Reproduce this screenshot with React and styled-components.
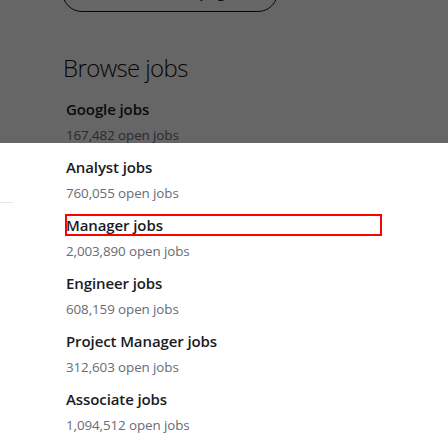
import React from "react";
import styled, { createGlobalStyle } from "styled-components";

const GlobalStyle = createGlobalStyle`
  html, body {
    margin: 0;
    padding: 0;
    background: #fff;
    font-family: "Open Sans", "Noto Sans", sans-serif;
    overflow: hidden;
  }
`;

const Page = styled.div`
  display: flex;
  width: 448px;
  height: 448px;
  overflow: hidden;
`;

const Aside = styled.div`
  width: 13px;
  flex: none;
  padding-top: 202px;

  hr {
    margin: 0;
    border: 0;
    border-top: 1px solid #e6e6e6;
  }
`;

const Main = styled.main`
  flex: 1;
  padding-left: 49px;
  margin-top: -28px;
`;

const PillButton = styled.button`
  display: block;
  width: 216px;
  height: 40px;
  border: 1px solid #111;
  border-radius: 20px;
  background: #fff;
  color: #222;
  font: 600 15px "Open Sans", sans-serif;
`;

const Heading = styled.h2`
  margin: 40px 0 0 1px;
  font-size: 24px;
  font-weight: 300;
  color: #111;
  letter-spacing: -0.6px;
  line-height: 32px;
`;

const List = styled.ul`
  list-style: none;
  margin: 14px 0 0;
  padding: 0 0 0 3px;
`;

const Item = styled.li`
  height: 58px;
`;

const Title = styled.a`
  display: block;
  box-sizing: border-box;
  width: 317px;
  height: 22px;
  padding-left: 1px;
  font-size: 15px;
  font-weight: 600;
  line-height: 22px;
  color: #191c24;
  text-decoration: none;
  letter-spacing: -0.1px;
  outline: ${({ $focused }) => ($focused ? "2px solid #ff0000" : "none")};
  outline-offset: -2px;
`;

const Count = styled.div`
  margin-top: 6px;
  padding-left: 1px;
  font-size: 13.4px;
  line-height: 18px;
  color: #676c76;
  letter-spacing: -0.1px;
`;

const Backdrop = styled.div`
  position: fixed;
  left: 0;
  top: 0;
  width: 100%;
  height: 143px;
  background: rgba(0, 0, 0, 0.6);
`;

const jobs = [
  ["Google jobs", "167,482"],
  ["Analyst jobs", "760,055"],
  ["Manager jobs", "2,003,890"],
  ["Engineer jobs", "608,159"],
  ["Project Manager jobs", "312,603"],
  ["Associate jobs", "1,094,512"],
];

export default function App() {
  return (
    <>
      <GlobalStyle />
      <Page>
        <Aside>
          <hr />
        </Aside>
        <Main>
          <PillButton>View the full page</PillButton>
          <Heading>Browse jobs</Heading>
          <List>
            {jobs.map(([title, count]) => (
              <Item key={title}>
                <Title href="#" $focused={title === "Manager jobs"}>
                  {title}
                </Title>
                <Count>{count} open jobs</Count>
              </Item>
            ))}
          </List>
        </Main>
      </Page>
      <Backdrop />
    </>
  );
}
